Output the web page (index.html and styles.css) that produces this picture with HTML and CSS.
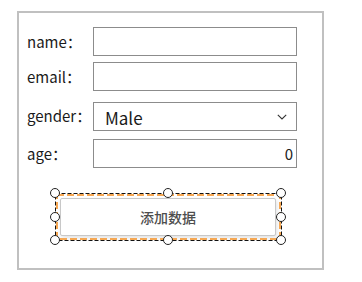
FILE: index.html
```html
<!DOCTYPE html>
<html lang="zh">
<head>
    <meta charset="UTF-8">
    <meta name="viewport" content="width=device-width, initial-scale=1.0">
    <title>添加数据</title>
    <link rel="stylesheet" href="styles.css">
</head>
<body>

<div class="panel">
    <div class="form-row">
        <label class="field-label" for="name">name：</label>
        <input class="field-input" id="name" type="text">
    </div>
    <div class="form-row">
        <label class="field-label" for="email">email：</label>
        <input class="field-input" id="email" type="text">
    </div>
    <div class="form-row row-gender">
        <label class="field-label" for="gender">gender：</label>
        <div class="select-wrap">
            <select class="field-select" id="gender">
                <option>Male</option>
                <option>Female</option>
            </select>
            <!-- dropdown arrow -->
            <svg class="chevron" width="10" height="6" viewBox="0 0 10 6">
                <path d="M0.8 0.8 L5 5 L9.2 0.8" fill="none" stroke="#333" stroke-width="1.1"/>
            </svg>
        </div>
    </div>
    <div class="form-row row-age">
        <label class="field-label" for="age">age：</label>
        <input class="field-input num-input" id="age" type="text" value="0">
    </div>

    <div class="selection">
        <button class="add-btn">添加数据</button>
        <svg class="sel-lines" width="227" height="48">
            <rect x="2" y="2" width="223" height="44" fill="none" stroke="#f6a854" stroke-width="2" stroke-dasharray="7 3"/>
            <rect x="0.5" y="0.5" width="226" height="47" fill="none" stroke="#111" stroke-width="1" stroke-dasharray="4 2"/>
        </svg>
        <span class="handle h-tl"></span>
        <span class="handle h-tm"></span>
        <span class="handle h-tr"></span>
        <span class="handle h-ml"></span>
        <span class="handle h-mr"></span>
        <span class="handle h-bl"></span>
        <span class="handle h-bm"></span>
        <span class="handle h-br"></span>
    </div>
</div>

</body>
</html>
```

FILE: styles.css
```css
body {
    margin: 0;
    padding: 11px 0 0 17px;
    background: #fff;
    font-family: "Noto Sans CJK SC", "Noto Sans", sans-serif;
    color: #222;
}

.panel {
    box-sizing: border-box;
    width: 307px;
    height: 259px;
    border: 2px solid #c0c0c0;
    padding: 14px 0 0 8px;
}

.form-row {
    display: flex;
    align-items: center;
    height: 29px;
}

.form-row + .form-row {
    margin-top: 6px;
}

.form-row.row-gender {
    margin-top: 11px;
}

.form-row.row-age {
    margin-top: 8px;
}

.field-label {
    width: 66px;
    font-size: 15px;
    color: #1a1a1a;
}

.row-gender .field-label {
    margin-top: -3px;
}

.field-input {
    box-sizing: border-box;
    width: 204px;
    height: 29px;
    margin: 0;
    padding: 0 3px;
    border: 1px solid #8c8c8c;
    border-radius: 0;
    font-family: inherit;
    font-size: 15px;
    color: #222;
    outline: none;
}

.num-input {
    text-align: right;
}

.select-wrap {
    position: relative;
    width: 204px;
    height: 29px;
}

.field-select {
    appearance: none;
    -webkit-appearance: none;
    box-sizing: border-box;
    width: 100%;
    height: 100%;
    margin: 0;
    padding: 2px 0 0 11px;
    border: 1px solid #8c8c8c;
    border-radius: 0;
    background: #fff;
    font-family: inherit;
    font-size: 17px;
    color: #1a1a1a;
    outline: none;
}

.chevron {
    position: absolute;
    right: 10px;
    top: 12px;
    pointer-events: none;
}

/* selected button with resize handles */
.selection {
    position: relative;
    box-sizing: border-box;
    width: 227px;
    height: 48px;
    margin: 25px 0 0 28px;
    padding: 5px 6px 5px 5px;
}

.add-btn {
    width: 100%;
    height: 100%;
    margin: 0;
    border: 1px solid #c8c8c8;
    border-radius: 2px;
    background: #fff;
    font-family: inherit;
    font-size: 14px;
    font-weight: 500;
    color: #4d4d4d;
    box-shadow: 1px 2px 4px rgba(0, 0, 0, 0.12);
}

.sel-lines {
    position: absolute;
    left: 0;
    top: 0;
    overflow: visible;
    pointer-events: none;
}

.handle {
    position: absolute;
    box-sizing: border-box;
    width: 10px;
    height: 10px;
    border: 1px solid #222;
    border-radius: 50%;
    background: #fff;
}

.h-tl, .h-tm, .h-tr { top: -5px; }
.h-ml, .h-mr { top: 19px; }
.h-bl, .h-bm, .h-br { top: 42px; }
.h-tl, .h-ml, .h-bl { left: -5px; }
.h-tm, .h-bm { left: 108px; }
.h-tr, .h-mr, .h-br { left: 221px; }
```
